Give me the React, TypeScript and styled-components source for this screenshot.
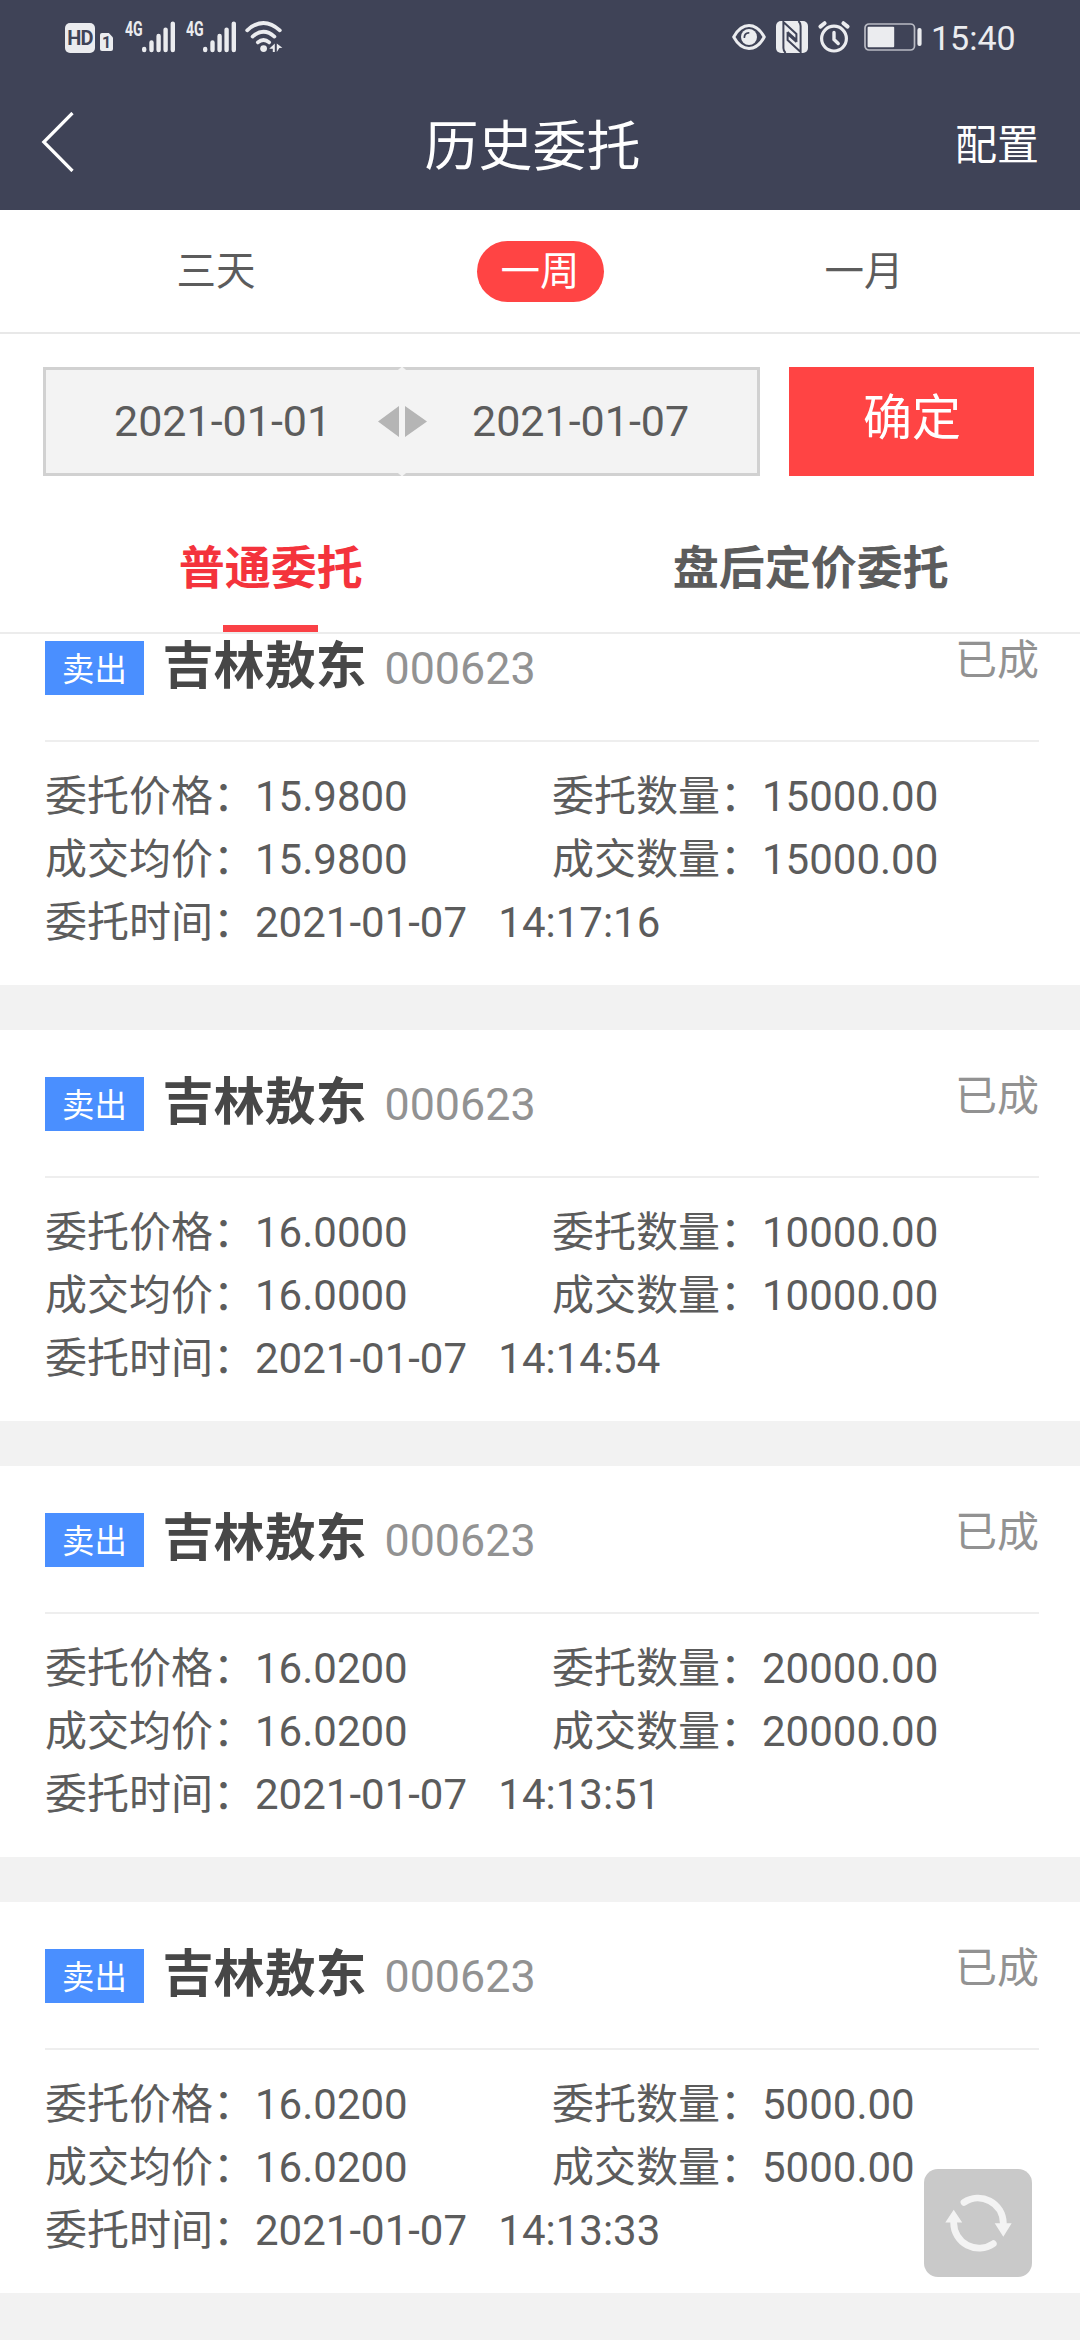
import React from "react";
import styled, { createGlobalStyle } from "styled-components";

const GlobalStyle = createGlobalStyle`
  html, body { margin: 0; padding: 0; background: #fff; }
  body {
    font-family: Roboto, "Noto Sans CJK SC", sans-serif;
    color: #5c5c5c;
    overflow: hidden;
  }
  * { box-sizing: border-box; }
  button { font: inherit; border: 0; padding: 0; background: none; color: inherit; }
`;

const Screen = styled.div`
  width: 1080px;
  height: 2340px;
  display: flex;
  flex-direction: column;
  overflow: hidden;
  background: #fff;
`;

const TopBar = styled.header`
  flex: none;
  height: 210px;
  background: #3f4357;
  color: #fff;
`;

const StatusBar = styled.div`
  height: 74px;
  display: flex;
  justify-content: space-between;
  padding: 0 65px;
  color: #ebecef;
`;

const StatusGroup = styled.div`
  display: flex;
  align-items: center;
`;

const StatusIcon = styled.svg<{ $gap?: number }>`
  display: block;
  flex: none;
  overflow: visible;
  margin-left: ${(p) => p.$gap ?? 0}px;
`;

const HdBadge = styled.span`
  width: 30px;
  height: 30px;
  border-radius: 5px;
  background: #ebecef;
  color: #3f4357;
  font-weight: 700;
  font-size: 20px;
  line-height: 31px;
  letter-spacing: -0.8px;
  text-align: center;
  margin-top: 2px;
`;

const SimBadge = styled.span`
  width: 13px;
  height: 18px;
  margin: 10px 0 0 5px;
  background: #ebecef;
  border-radius: 2px;
  clip-path: polygon(0 0, 68% 0, 100% 25%, 100% 100%, 0 100%);
  color: #3f4357;
  font-weight: 700;
  font-size: 16px;
  line-height: 19px;
  text-align: center;
`;

const Signal = styled.div<{ $gap: number }>`
  display: flex;
  width: 50px;
  height: 32px;
  margin-left: ${(p) => p.$gap}px;
`;

const Network = styled.span`
  width: 17px;
  font-size: 20.5px;
  font-weight: 700;
  line-height: 16px;
  transform: scaleX(0.69);
  transform-origin: 0 0;
`;

const Clock = styled.span`
  width: 84px;
  font-size: 34px;
  line-height: 40px;
  margin: 2px 0 0 9px;
`;

const TitleBar = styled.div`
  height: 136px;
  display: grid;
  grid-template-columns: 200px 1fr 215px;
  align-items: center;
`;

const BackButton = styled.button`
  display: flex;
  padding-left: 41px;
`;

const Title = styled.h1`
  margin: 11px 0 0;
  font-size: 54px;
  line-height: 64px;
  font-weight: 400;
  text-align: center;
`;

const ConfigButton = styled.button`
  margin-top: 7px;
  padding-right: 41px;
  font-size: 42px;
  line-height: 60px;
  text-align: right;
`;

const Periods = styled.nav`
  flex: none;
  height: 124px;
  padding: 31px 54px 0;
  display: grid;
  grid-template-columns: repeat(3, 1fr);
  justify-items: center;
  align-items: start;
  border-bottom: 2px solid #e8e8e8;
`;

const Period = styled.button<{ $active?: boolean }>`
  width: 127px;
  height: 61px;
  border-radius: 31px;
  font-size: 39.5px;
  line-height: 61px;
  text-align: center;
  color: ${(p) => (p.$active ? "#fff" : "#5c5c5c")};
  background: ${(p) => (p.$active ? "#ff4444" : "transparent")};
`;

const Filter = styled.div`
  flex: none;
  height: 142px;
  padding: 33px 46px 0 43px;
  display: flex;
  justify-content: space-between;
`;

const DateRange = styled.div`
  width: 717px;
  height: 109px;
  border: 3px solid #d1d1d1;
  background: #f3f3f3;
  display: flex;
  align-items: center;
`;

const DateValue = styled.span<{ $left: number }>`
  width: 217px;
  margin: 0 0 2px ${(p) => p.$left}px;
  font-size: 43px;
  line-height: 60px;
  white-space: nowrap;
`;

const Swap = styled.svg`
  display: block;
  flex: none;
  margin: 0 0 0 47px;
  overflow: visible;
`;

const Confirm = styled.button`
  width: 245px;
  height: 109px;
  padding: 0 0 5px 1px;
  background: #ff4444;
  color: #fff;
  font-size: 49px;
  line-height: 60px;
`;

const Tabs = styled.nav`
  flex: none;
  height: 158px;
  display: grid;
  grid-template-columns: 1fr 1fr;
  border-bottom: 2px solid #ececec;
`;

const Tab = styled.button<{ $active?: boolean }>`
  display: flex;
  flex-direction: column;
  align-items: center;
  justify-content: space-between;
  padding-top: 62px;
  font-size: 46px;
  line-height: 60px;
  font-weight: 700;
  text-indent: 1.5px;
  color: ${(p) => (p.$active ? "#f4333c" : "#5c5c5c")};
  &::after {
    content: "";
    width: 95px;
    height: 7px;
    background: ${(p) => (p.$active ? "#fa4146" : "transparent")};
  }
`;

const List = styled.main`
  flex: 1;
  min-height: 0;
  overflow: hidden;
  background: #f2f2f2;
  display: flex;
  flex-direction: column;
  gap: 45px;
`;

const Card = styled.article`
  flex: none;
  height: 391px;
  padding: 0 41px 0 45px;
  background: #fff;
  &:first-child { margin-top: -40px; }
`;

const CardHead = styled.div`
  height: 148px;
  display: flex;
  align-items: flex-start;
  border-bottom: 2px solid #eeeeee;
`;

const Side = styled.span`
  width: 99px;
  height: 54px;
  margin-top: 47px;
  background: #4a8fff;
  color: #fff;
  font-size: 32.4px;
  line-height: 58px;
  text-align: center;
`;

const Stock = styled.div`
  display: flex;
  align-items: baseline;
  gap: 18px;
  margin: 42px 0 0 18.5px;
`;

const StockName = styled.strong`
  font-size: 51px;
  line-height: 62px;
  font-weight: 700;
  color: #474747;
`;

const StockCode = styled.span`
  font-size: 44.8px;
  line-height: 62px;
  color: #929292;
`;

const State = styled.span`
  margin: 37px 0 0 auto;
  font-size: 42px;
  line-height: 60px;
  color: #929292;
`;

const Details = styled.div`
  padding-top: 23px;
  display: grid;
  grid-template-columns: 507px 1fr;
  grid-auto-rows: 63px;
`;

const Field = styled.div<{ $wide?: boolean }>`
  grid-column: ${(p) => (p.$wide ? "1 / -1" : "auto")};
  font-size: 42px;
  line-height: 63px;
  white-space: pre;
`;

const RefreshButton = styled.button`
  position: fixed;
  left: 924px;
  top: 2169px;
  width: 108px;
  height: 108px;
  border-radius: 14px;
  background: #c9c9c9;
`;

const SignalBars = () => (
  <StatusIcon width="33" height="32" viewBox="0 0 33 32" fill="none" stroke="currentColor" strokeWidth="4.4" strokeLinecap="round">
    <path d="M2.2 28v1M9.5 21.4v7.6M16.6 15v14M23.6 8.6V29M30.8 2.6V29" />
  </StatusIcon>
);

const WifiIcon = () => (
  <StatusIcon $gap={9} width="38" height="32" viewBox="0 0 38 32">
    <g fill="none" stroke="currentColor" strokeWidth="3.8" strokeLinecap="round">
      <path d="M2.2 9.3Q18.5-5.5 34.8 9.3" />
      <path d="M7.6 15.6Q18.5 6 29.4 15.6" />
      <path d="M12.8 21.4Q18.5 16.6 24.2 21.4" />
    </g>
    <circle cx="18.6" cy="27.6" r="3.4" fill="currentColor" />
    <path d="M24.2 27.8 29.8 22.5V31h-2v-3.2zM31.8 22.5l5.6 4.2-3 .4L31.8 31z" fill="currentColor" />
  </StatusIcon>
);

const EyeIcon = () => (
  <StatusIcon width="34" height="28" viewBox="0 0 34 28">
    <path d="M1.7 14Q8 2.6 17 2.6T32.3 14Q26 25.4 17 25.4T1.7 14Z" fill="none" stroke="currentColor" strokeWidth="3" strokeLinejoin="round" />
    <circle cx="17" cy="14" r="8" fill="currentColor" />
    <path d="M12.4 14.2a4.6 4.6 0 0 1 4.2-4.4" fill="none" stroke="#3f4357" strokeWidth="1.8" strokeLinecap="round" />
  </StatusIcon>
);

const NfcIcon = () => (
  <StatusIcon $gap={10} width="32" height="32" viewBox="0 0 32 32">
    <rect width="32" height="32" rx="5" fill="currentColor" />
    <g fill="none" stroke="#3f4357" strokeWidth="2" strokeLinejoin="miter">
      <path d="M9.6 32Q7.4 30 7.4 27V1L20.4 13V19L11.5 11" />
      <path d="M22.4 0Q24.6 2 24.6 5V31L11.6 19V13L20.5 21" />
    </g>
  </StatusIcon>
);

const AlarmIcon = () => (
  <StatusIcon $gap={10} width="32" height="32" viewBox="0 0 32 32" fill="none" stroke="currentColor" strokeWidth="3.2" strokeLinecap="round">
    <circle cx="16" cy="17.6" r="12.4" />
    <path d="M16 11.5v7l4.2 4" strokeWidth="3.4" />
    <path d="M2.4 5.6 6.6 2.2M29.6 5.6 25.4 2.2" strokeWidth="4" />
  </StatusIcon>
);

const BatteryIcon = () => (
  <StatusIcon $gap={14} width="58" height="28" viewBox="0 0 58 28">
    <rect x="1" y="1" width="49.5" height="26" rx="4" fill="none" stroke="#b9bbc4" strokeWidth="1.7" />
    <rect x="3.6" y="3.8" width="26.6" height="20.4" rx="1" fill="currentColor" />
    <rect x="53.4" y="5" width="4.2" height="18" rx="2" fill="currentColor" />
  </StatusIcon>
);

type Order = { price: string; average: string; quantity: string; filled: string; time: string };

const orders: Order[] = [
  { price: "15.9800", average: "15.9800", quantity: "15000.00", filled: "15000.00", time: "14:17:16" },
  { price: "16.0000", average: "16.0000", quantity: "10000.00", filled: "10000.00", time: "14:14:54" },
  { price: "16.0200", average: "16.0200", quantity: "20000.00", filled: "20000.00", time: "14:13:51" },
  { price: "16.0200", average: "16.0200", quantity: "5000.00", filled: "5000.00", time: "14:13:33" },
];

const OrderCard = ({ order }: { order: Order }) => (
  <Card>
    <CardHead>
      <Side>卖出</Side>
      <Stock>
        <StockName>吉林敖东</StockName>
        <StockCode>000623</StockCode>
      </Stock>
      <State>已成</State>
    </CardHead>
    <Details>
      <Field>委托价格：{order.price}</Field>
      <Field>委托数量：{order.quantity}</Field>
      <Field>成交均价：{order.average}</Field>
      <Field>成交数量：{order.filled}</Field>
      <Field $wide>{`委托时间：2021-01-07   ${order.time}`}</Field>
    </Details>
  </Card>
);

export default function App() {
  return (
    <>
      <GlobalStyle />
      <Screen lang="zh-CN">
        <TopBar>
          <StatusBar>
            <StatusGroup>
              <HdBadge>HD</HdBadge>
              <SimBadge>1</SimBadge>
              <Signal $gap={12}>
                <Network>4G</Network>
                <SignalBars />
              </Signal>
              <Signal $gap={11}>
                <Network>4G</Network>
                <SignalBars />
              </Signal>
              <WifiIcon />
            </StatusGroup>
            <StatusGroup>
              <EyeIcon />
              <NfcIcon />
              <AlarmIcon />
              <BatteryIcon />
              <Clock>15:40</Clock>
            </StatusGroup>
          </StatusBar>
          <TitleBar>
            <BackButton aria-label="返回">
              <svg width="34" height="60" viewBox="0 0 34 60" fill="none" stroke="#fff" strokeWidth="3.2">
                <path d="M31.5 1 2.8 30l28.7 29" />
              </svg>
            </BackButton>
            <Title>历史委托</Title>
            <ConfigButton>配置</ConfigButton>
          </TitleBar>
        </TopBar>
        <Periods>
          <Period>三天</Period>
          <Period $active>一周</Period>
          <Period>一月</Period>
        </Periods>
        <Filter>
          <DateRange>
            <DateValue $left={68}>2021-01-01</DateValue>
            <Swap width="49" height="109" viewBox="0 0 49 109">
              <path d="M0 54.5 21 39v31zM49 54.5 27 39v31z" fill="#b5b5b5" />
              <path d="M20.5 3 24 0l3.5 3zM20.5 106l3.5 3 3.5-3z" fill="#f3f3f3" stroke="#f3f3f3" />
            </Swap>
            <DateValue $left={45}>2021-01-07</DateValue>
          </DateRange>
          <Confirm>确定</Confirm>
        </Filter>
        <Tabs>
          <Tab $active>普通委托</Tab>
          <Tab>盘后定价委托</Tab>
        </Tabs>
        <List>
          {orders.map((order) => (
            <OrderCard key={order.time} order={order} />
          ))}
        </List>
      </Screen>
      <RefreshButton aria-label="刷新">
        <svg width="108" height="108" viewBox="0 0 108 108">
          <g fill="none" stroke="#f3f3f3" strokeWidth="6.8" strokeLinecap="round">
            <path d="M40 33.3A25.3 25.3 0 0 1 79.3 54" />
            <path d="M69.3 74.7A25.3 25.3 0 0 1 29.7 54" />
          </g>
          <path d="M70.7 54.3h17L79.3 67.7zM21.3 53.6h16.9L29.7 40.7z" fill="#f3f3f3" />
        </svg>
      </RefreshButton>
    </>
  );
}
